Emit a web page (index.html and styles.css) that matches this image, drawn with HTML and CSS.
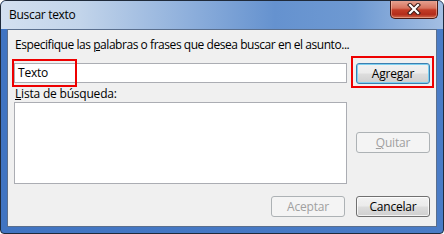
FILE: index.html
```html
<!DOCTYPE html>
<html lang="es">
<head>
<meta charset="utf-8">
<title>Buscar texto</title>
<link rel="stylesheet" href="styles.css">
</head>
<body>
<div class="window">
  <div class="titlebar">
    <span class="title">Buscar texto</span>
    <button class="close" aria-label="Cerrar">
      <svg width="16" height="12" viewBox="0 0 16 12">
        <path d="M4 2 L12 10 M12 2 L4 10" stroke="#3b1b16" stroke-width="4.2" stroke-linecap="square"/>
        <path d="M4 2 L12 10 M12 2 L4 10" stroke="#ffffff" stroke-width="2.2" stroke-linecap="square"/>
      </svg>
    </button>
  </div>
  <div class="client">
    <div class="prompt">Especifique las <u>p</u>alabras o frases que desea buscar en el asunto...</div>
    <div class="field-wrap">
      <div class="textbox">Texto</div>
      <span class="mark mark-input"></span>
    </div>
    <div class="btn-wrap">
      <button class="btn btn-default">Agregar</button>
      <span class="mark mark-btn"></span>
    </div>
    <div class="list-label"><u>L</u>ista de búsqueda:</div>
    <div class="listbox"></div>
    <div class="side">
      <button class="btn btn-disabled"><u>Q</u>uitar</button>
    </div>
    <div class="footer">
      <button class="btn btn-disabled">Aceptar</button>
      <button class="btn">Cancelar</button>
    </div>
  </div>
</div>
</body>
</html>
```

FILE: styles.css
```css
* { box-sizing: border-box; }
html, body { margin: 0; padding: 0; }
body {
  width: 444px;
  height: 234px;
  background: #ffffff;
  font-family: "Open Sans", "Noto Sans", sans-serif;
  font-size: 12px;
  color: #000;
  overflow: hidden;
}
.window {
  width: 444px;
  height: 234px;
  border: 1px solid #1f2a3a;
  border-radius: 6px 6px 4px 4px;
  background: linear-gradient(90deg, #4074c2 0%, #4a7cc6 100%);
  display: flex;
  flex-direction: column;
  padding: 0 6px 6px 6px;
  overflow: hidden;
}
.titlebar {
  height: 28px;
  margin: 0 -6px;
  padding: 0 6px 0 8px;
  display: flex;
  align-items: flex-start;
  justify-content: space-between;
  background: linear-gradient(90deg, #d3e0f0 0%, #c2d4ea 18%, #8fb0dc 42%, #6592cf 62%, #6e99d2 80%, #a4bfe3 100%);
}
.title {
  margin-top: 6px;
  font-size: 12px;
  line-height: 16px;
  color: #000;
  letter-spacing: -0.3px;
}
.close {
  width: 48px;
  height: 19px;
  margin-top: -1px;
  margin-right: -1px;
  border: 1px solid #4a1a14;
  border-top: none;
  border-radius: 0 0 5px 5px;
  background: linear-gradient(180deg, #e7a796 0%, #d7735e 45%, #c23c26 55%, #b32d1b 80%, #cf6a4d 100%);
  box-shadow: inset 0 0 0 1px rgba(255,210,190,0.45);
  padding: 0;
  display: flex;
  align-items: center;
  justify-content: center;
}
.close svg { display: block; }
.client {
  flex: 1;
  background: #f0f0f0;
  border: 1px solid #5a6f8e;
  display: grid;
  grid-template-columns: 333px 74px;
  column-gap: 9px;
  grid-template-rows: auto auto auto auto 1fr;
  padding: 7px 0 0 6px;
  position: relative;
}
.prompt {
  grid-column: 1 / 3;
  line-height: 16px;
  white-space: nowrap;
  letter-spacing: -0.45px;
  padding-left: 1px;
}
u { text-decoration: underline; text-underline-offset: 1px; }
.field-wrap, .btn-wrap { position: relative; margin-top: 10px; }
.textbox {
  height: 20px;
  background: #fff;
  border: 1px solid #abadb3;
  padding: 0 3px;
  line-height: 18px;
  letter-spacing: -0.2px;
}
.btn-wrap { margin-top: 10px; }
.btn {
  width: 74px;
  height: 21px;
  font-family: inherit;
  font-size: 12px;
  letter-spacing: -0.2px;
  color: #000;
  border: 1px solid #707070;
  border-radius: 3px;
  background: linear-gradient(180deg, #f2f2f2 0%, #ebebeb 48%, #dddddd 52%, #cfcfcf 100%);
  box-shadow: inset 0 0 0 1px rgba(255,255,255,0.75);
  padding: 0;
  line-height: 17px;
  display: block;
}
.btn-default {
  border-color: #3c7fb1;
  box-shadow: inset 0 0 0 1px #7ed0f0;
}
.btn-disabled {
  color: #a0a0a0;
  border-color: #adb2b5;
  background: #f4f4f4;
  box-shadow: none;
}
.mark {
  position: absolute;
  border: 2px solid #ee0000;
  pointer-events: none;
}
.mark-input { left: -2px; top: -4px; width: 65px; height: 28px; }
.mark-btn { left: -5px; top: -7px; width: 83px; height: 32px; }
.list-label {
  grid-column: 1 / 3;
  margin-top: 1px;
  line-height: 17px;
  letter-spacing: -0.2px;
  padding-left: 1px;
}
.listbox {
  height: 82px;
  background: #fff;
  border: 1px solid #abadb3;
}
.side { padding-top: 30px; }
.footer {
  grid-column: 1 / 3;
  display: flex;
  justify-content: flex-end;
  gap: 11px;
  margin-top: 12px;
}
```
